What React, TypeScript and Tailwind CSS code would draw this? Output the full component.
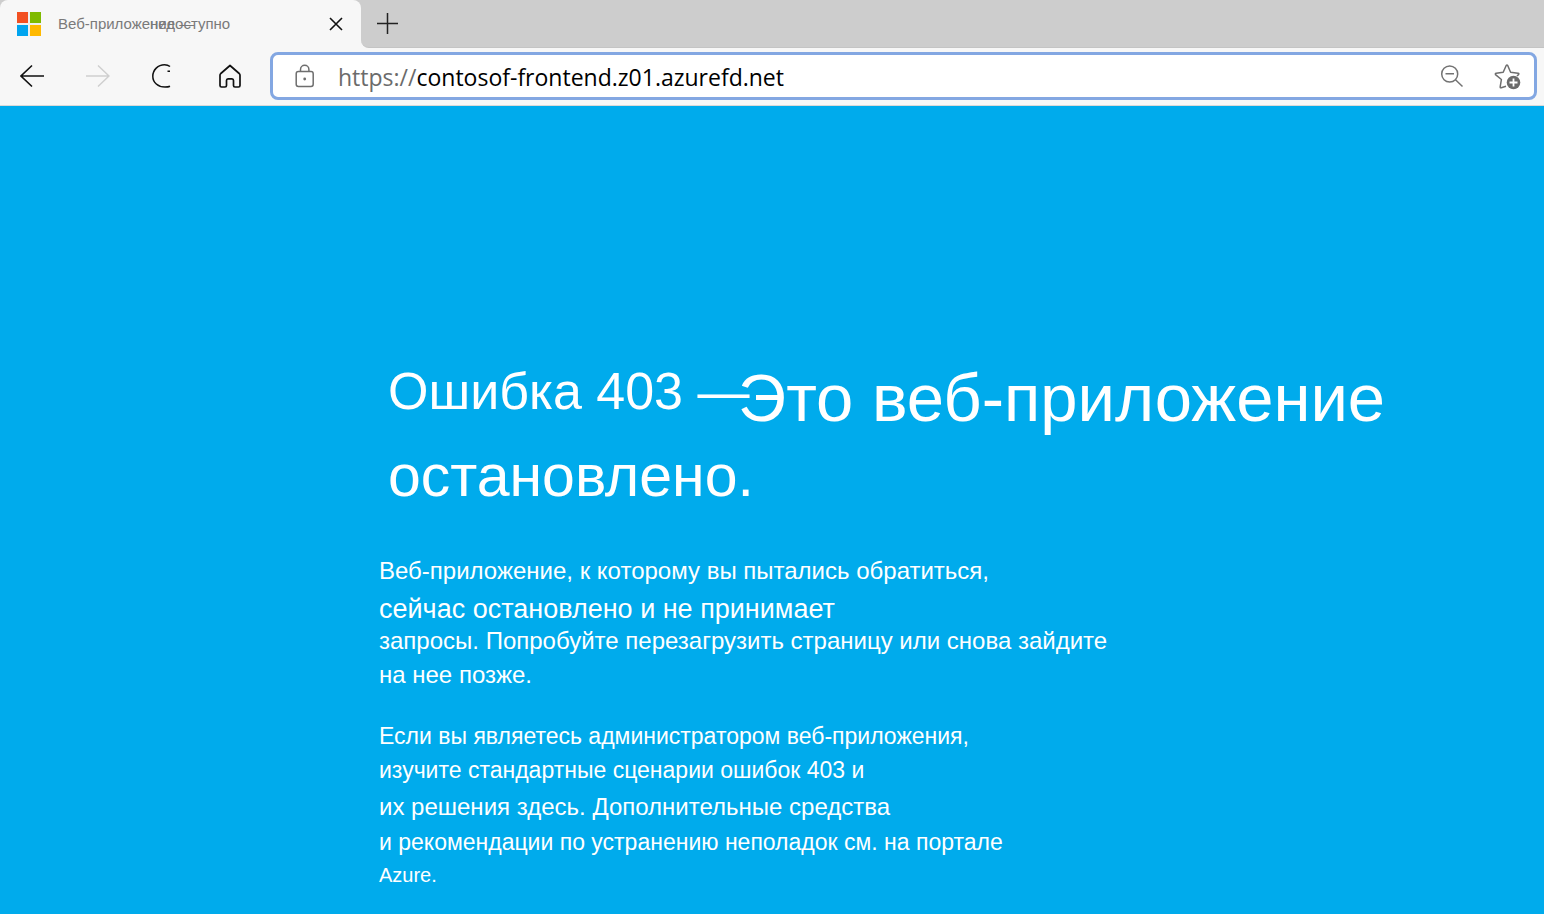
import React from 'react';

function WindowsLogo() {
  return (
    <svg width="24" height="24" viewBox="0 0 24 24" aria-hidden="true" className="shrink-0">
      <rect width="24" height="24" fill="#eef0ef" />
      <rect width="11" height="11" fill="#f25022" />
      <rect x="13" width="11" height="11" fill="#7fba00" />
      <rect y="13" width="11" height="11" fill="#00a4ef" />
      <rect x="13" y="13" width="11" height="11" fill="#ffb900" />
    </svg>
  );
}

function TabStrip() {
  return (
    <div className="flex h-12 bg-[#cdcdcd]">
      <div className="flex w-[361px] items-center rounded-t-lg bg-[#f7f7f7] pl-[17px] pr-[15px]">
        <WindowsLogo />
        <p className="ml-[17px] flex flex-1 whitespace-nowrap text-[15px] leading-5 text-[#7a7a7a]">
          <span className="w-[92px]">Веб-приложение —</span>
          <span>недоступно</span>
        </p>
        <button type="button" aria-label="Закрыть вкладку" className="flex size-5 items-center justify-center">
          <svg width="14" height="14" viewBox="0 0 14 14" fill="none" stroke="#111" strokeWidth="1.6">
            <path d="M1 1 13 13M13 1 1 13" />
          </svg>
        </button>
      </div>
      <div className="flex flex-1 bg-[#f7f7f7]">
        <div className="flex flex-1 items-center rounded-bl-lg border-b border-[#c4c4c4] bg-[#cdcdcd] pl-4">
          <button type="button" aria-label="Новая вкладка">
            <svg width="21" height="21" viewBox="0 0 21 21" fill="none" stroke="#222" strokeWidth="1.5">
              <path d="M10.5 0V21M0 10.5H21" />
            </svg>
          </button>
        </div>
      </div>
    </div>
  );
}

function Toolbar() {
  return (
    <div className="flex h-[58px] items-center border-b border-[#d9d9d9] bg-[#f7f7f7] pb-[2px] pl-5 pr-[7px]">
      <nav className="flex items-center gap-[42px]">
        <button type="button" aria-label="Назад">
          <svg width="24" height="24" viewBox="0 0 24 24" fill="none" stroke="#111" strokeWidth="1.6">
            <path d="M12 1.5 1 12 12 22.5M1 12H24" />
          </svg>
        </button>
        <button type="button" aria-label="Вперед" disabled>
          <svg width="24" height="24" viewBox="0 0 24 24" fill="none" stroke="#cfcfcf" strokeWidth="1.5">
            <path d="M12 1.5 23 12 12 22.5M23 12H0" />
          </svg>
        </button>
        <button type="button" aria-label="Обновить">
          <svg width="24" height="24" viewBox="0 0 24 24" fill="none" stroke="#111" strokeWidth="1.5">
            <path d="M18 2.5C16.500 1.300 14.800.8 12.500.8 6 .8.8 5.800.8 12.200S6 23 13 23C15 23 16.500 22.900 18 22.200M15.500 7.200H18" />
          </svg>
        </button>
        <button type="button" aria-label="Домашняя страница">
          <svg width="24" height="24" viewBox="0 0 24 24" fill="none" stroke="#111" strokeWidth="1.700" strokeLinejoin="round">
            <path d="M12 1.500 21.200 9.500Q22 10.300 22 11.300V21.500Q22 23 20.500 23H17Q15.500 23 15.500 21.500V16.500Q15.500 14.800 14 14.800H10Q8.500 14.800 8.500 16.500V21.500Q8.500 23 7 23H3.500Q2 23 2 21.500V11.300Q2 10.300 2.800 9.500Z" />
          </svg>
        </button>
      </nav>
      <form
        onSubmit={(e) => e.preventDefault()}
        className="ml-7 flex h-12 flex-1 items-center rounded-lg border-[3px] border-[#83a7e2] bg-white pl-[22px] pr-3"
      >
        <svg width="20" height="24" viewBox="0 0 20 24" fill="none" stroke="#6e6e6e" strokeWidth="1.5" aria-hidden="true" className="shrink-0">
          <rect x="1.200" y="7.500" width="17" height="15" rx="2.200" />
          <path d="M5.500 7.500V5.500A4.200 4.200 0 0 1 13.900 5.500V7.500" />
          <circle cx="9.700" cy="15" r="1.400" fill="#6e6e6e" stroke="none" />
        </svg>
        <label htmlFor="address" className="ml-[23px] pt-[2px] font-['Open_Sans',sans-serif] text-[23px] leading-8 text-[#6b6b6b]">
          https://
        </label>
        <input
          id="address"
          type="text"
          defaultValue="contosof-frontend.z01.azurefd.net"
          className="min-w-0 flex-1 bg-transparent pt-[2px] font-['Open_Sans',sans-serif] text-[23px] leading-8 text-black outline-none"
        />
        <button type="button" aria-label="Уменьшить масштаб">
          <svg width="24" height="24" viewBox="0 0 24 24" fill="none" stroke="#737373" strokeWidth="1.500">
            <circle cx="9.700" cy="10" r="8" />
            <path d="M5.500 9.800H14M15.500 15.800 22.500 22.500" />
          </svg>
        </button>
        <button type="button" aria-label="Добавить в избранное" className="ml-[30px]">
          <svg width="28" height="28" viewBox="0 0 28 28" fill="none" stroke="#6e6e6e" strokeWidth="1.500" strokeLinejoin="round">
            <path d="M12 24.300 7.200 25.800Q6 26 6.200 24.700L7.400 17.500 1.500 12.600Q1 11.500 2.200 11.200L9.200 10.200 12.200 3.500Q13 2.500 13.700 3.500L16.600 10.200 24 11.200Q25.500 11.500 24.500 12.600L23 14" />
            <circle cx="19.500" cy="20.500" r="6.800" fill="#6b6b6b" stroke="none" />
            <path d="M19.500 16.500V24.500M15.500 20.500H23.500" stroke="#fff" strokeWidth="1.800" />
          </svg>
        </button>
      </form>
    </div>
  );
}

function ErrorPage() {
  return (
    <main className="flex-1 whitespace-nowrap bg-[#00abec] pb-4 pl-[379px] pt-[249px] text-white">
      <h1 className="pl-[9px]">
        <span className="flex items-start">
          <span className="w-[350px] text-[52px] leading-[72px]">Ошибка 403 —</span>
          <span className="text-[67px] leading-[86px]">Это веб-приложение</span>
        </span>
        <span className="block text-[59px] leading-[70px]">остановлено.</span>
      </h1>
      <p className="mt-[42px] text-[24px]">
        <span className="block leading-9">Веб-приложение, к которому вы пытались обратиться,</span>
        <span className="block text-[27px] leading-10">сейчас остановлено и не принимает</span>
        <span className="block leading-6">запросы. Попробуйте перезагрузить страницу или снова зайдите</span>
        <span className="mt-2 block leading-7">на нее позже.</span>
      </p>
      <p className="mt-[30px] text-[23px]">
        <span className="block leading-[34px]">Если вы являетесь администратором веб-приложения,</span>
        <span className="block leading-[34px]">изучите стандартные сценарии ошибок 403 и</span>
        <span className="block text-[24px] leading-10">
          их решения <a href="#scenarios">здесь</a>. Дополнительные средства
        </span>
        <span className="block leading-[30px]">и рекомендации по устранению неполадок см. на портале</span>
        <span className="block text-[20px] leading-9">Azure.</span>
      </p>
    </main>
  );
}

export default function App() {
  return (
    <div className="flex min-h-screen flex-col overflow-x-hidden font-['Liberation_Sans',Arial,sans-serif]">
      <header>
        <TabStrip />
        <Toolbar />
      </header>
      <ErrorPage />
    </div>
  );
}
